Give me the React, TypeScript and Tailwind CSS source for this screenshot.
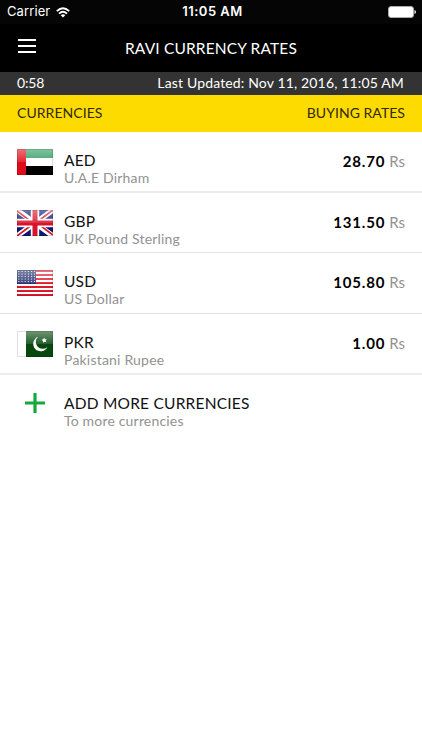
import type { ReactNode } from "react";

function UaeFlag() {
  return (
    <>
      <rect width="36" height="26" fill="#fff" />
      <rect width="36" height="9" fill="#279a5b" />
      <rect y="17" width="36" height="9" fill="#000" />
      <rect width="9" height="26" fill="#e00b18" />
    </>
  );
}

function UkFlag() {
  return (
    <>
      <rect width="36" height="26" fill="#0b1672" />
      <path d="M0 0L36 26M36 0L0 26" stroke="#fff" strokeWidth="5.2" />
      <path d="M0 1L16 13M36 0L20 12M0 26L16 14M36 25L20 13" stroke="#d8142c" strokeWidth="1.7" />
      <path d="M18 0V26M0 13H36" stroke="#fff" strokeWidth="8.4" />
      <path d="M18 0V26M0 13H36" stroke="#d8142c" strokeWidth="5" />
    </>
  );
}

function UsFlag() {
  const stripes = [0, 4, 8, 12, 16, 20, 24];
  const rows = [1.5, 4, 6.5, 9, 11.5];
  const columns = [1.8, 5, 8.2, 11.4, 14.6, 17.5];
  return (
    <>
      <rect width="36" height="26" fill="#fff" />
      {stripes.map((y) => (
        <rect key={y} y={y} width="36" height="2" fill="#e0182b" />
      ))}
      <rect width="19" height="14" fill="#24306f" />
      {rows.map((y) =>
        columns.map((x) => <circle key={`${x}-${y}`} cx={x} cy={y} r="0.6" fill="#fff" />),
      )}
    </>
  );
}

function PakistanFlag() {
  return (
    <>
      <rect width="36" height="26" fill="#fff" />
      <rect x="9" width="27" height="26" fill="#07480f" />
      <path d="M21 5.8A7.5 7.5 0 1 0 30.5 16A6.7 6.7 0 1 1 21 5.8Z" fill="#fff" />
      <path d="M27 6.5L28 8.2L29.8 8L28.7 9.5L29.4 11.3L27.5 10.7L26 11.8L26 9.9L24.5 8.8L26.4 8.3Z" fill="#fff" />
    </>
  );
}

function Flag({ id, children }: { id: string; children: ReactNode }) {
  return (
    <svg className="h-[26px] w-9 shrink-0" viewBox="0 0 36 26">
      <defs>
        <linearGradient id={id} x1="0" y1="0" x2="0" y2="1">
          <stop offset="0" stopColor="#fff" stopOpacity="0.42" />
          <stop offset="0.5" stopColor="#fff" stopOpacity="0.12" />
          <stop offset="0.52" stopColor="#fff" stopOpacity="0" />
        </linearGradient>
      </defs>
      {children}
      <rect width="36" height="26" fill={`url(#${id})`} />
      <rect x="0.5" y="0.5" width="35" height="25" fill="none" stroke="#000" strokeOpacity="0.13" />
    </svg>
  );
}

const currencies = [
  { code: "AED", name: "U.A.E Dirham", rate: "28.70", flag: <UaeFlag />, row: "h-[61px] border-b-2 border-[#ececec] pt-px" },
  { code: "GBP", name: "UK Pound Sterling", rate: "131.50", flag: <UkFlag />, row: "h-[60px] border-b border-[#e2e2e2]" },
  { code: "USD", name: "US Dollar", rate: "105.80", flag: <UsFlag />, row: "h-[61px] border-b border-[#e2e2e2]" },
  { code: "PKR", name: "Pakistani Rupee", rate: "1.00", flag: <PakistanFlag />, row: "h-[61px] border-b-2 border-[#ececec] pt-px" },
];

export default function App() {
  return (
    <div className="flex h-[750px] w-[422px] flex-col overflow-hidden whitespace-nowrap bg-white font-['Lato',sans-serif] text-[#111]">
      <div className="grid h-6 shrink-0 grid-cols-3 items-center bg-[#050505] pl-[7px] pr-[6px] font-['Inter',sans-serif] text-white">
        <div className="flex items-center gap-[6px]">
          <span className="text-[13px] tracking-[0.1px]">Carrier</span>
          <svg className="h-[11px] w-[14px]" viewBox="0 0 14 11" fill="none" stroke="#fff" strokeWidth="1.8">
            <path d="M0.8 4.2Q7 -1.8 13.2 4.2M3 6.6Q7 2.8 11 6.6" />
            <path d="M7 10.6L4.7 8.3Q7 6.3 9.3 8.3Z" fill="#fff" stroke="none" />
          </svg>
        </div>
        <span className="pl-[2px] text-center text-[13px] font-semibold tracking-[0.5px]">11:05 AM</span>
        <svg className="h-3 w-7 justify-self-end" viewBox="0 0 28 12">
          <rect x="0.5" y="0.5" width="25" height="11" rx="2.5" fill="#fff" stroke="#aaa" />
          <path d="M26.5 4Q28 4.5 28 6T26.5 8Z" fill="#fff" />
        </svg>
      </div>
      <header className="grid h-12 shrink-0 grid-cols-[1fr_auto_1fr] items-center bg-black px-[18px] text-white">
        <svg className="mb-[4px] h-[14px] w-[18px]" viewBox="0 0 18 14" stroke="#fff" strokeWidth="2">
          <path d="M0 1H18M0 7H18M0 13H18" />
        </svg>
        <h1 className="pt-[2px] text-[15.5px] tracking-[0.15px]">RAVI CURRENCY RATES</h1>
      </header>
      <div className="flex h-[23px] shrink-0 items-center justify-between bg-[#333] pb-[2px] pl-[17px] pr-[18px] text-[14px] text-white">
        <span className="tracking-[-0.2px]">0:58</span>
        <span className="tracking-[0.15px]">Last Updated: Nov 11, 2016, 11:05 AM</span>
      </div>
      <div className="flex h-[37px] shrink-0 items-center justify-between bg-[#fedb00] pb-[2px] pl-[17px] pr-[17px] text-[14px] text-[#30290a]">
        <span className="tracking-[0.05px]">CURRENCIES</span>
        <span className="tracking-[0.05px]">BUYING RATES</span>
      </div>
      <ul>
        {currencies.map((c) => (
          <li key={c.code} className={`flex items-center pl-[17px] pr-[17px] ${c.row}`}>
            <Flag id={`gloss-${c.code}`}>{c.flag}</Flag>
            <div className="ml-[11px] flex-1 pt-[13px]">
              <div className="text-[15.5px] leading-[18px] tracking-[0.2px]">{c.code}</div>
              <div className="text-[14px] leading-[17px] tracking-[0.2px] text-[#929292]">{c.name}</div>
            </div>
            <div className="pb-[2px] text-[15px] leading-[18px]">
              <span className="font-bold tracking-[0.8px] text-black">{c.rate}</span>
              <span className="ml-[4px] text-[#929292]">Rs</span>
            </div>
          </li>
        ))}
      </ul>
      <div className="flex h-[58px] shrink-0 items-center pl-[25px]">
        <svg className="mb-[2px] h-5 w-5" viewBox="0 0 20 20" stroke="#16a83c" strokeWidth="3.2">
          <path d="M10 0V20M0 10H20" />
        </svg>
        <div className="ml-[19px] pt-[15px]">
          <div className="text-[15.5px] leading-[18px] tracking-[0.22px]">ADD MORE CURRENCIES</div>
          <div className="text-[14px] leading-[17px] tracking-[0.18px] text-[#929292]">To more currencies</div>
        </div>
      </div>
    </div>
  );
}
